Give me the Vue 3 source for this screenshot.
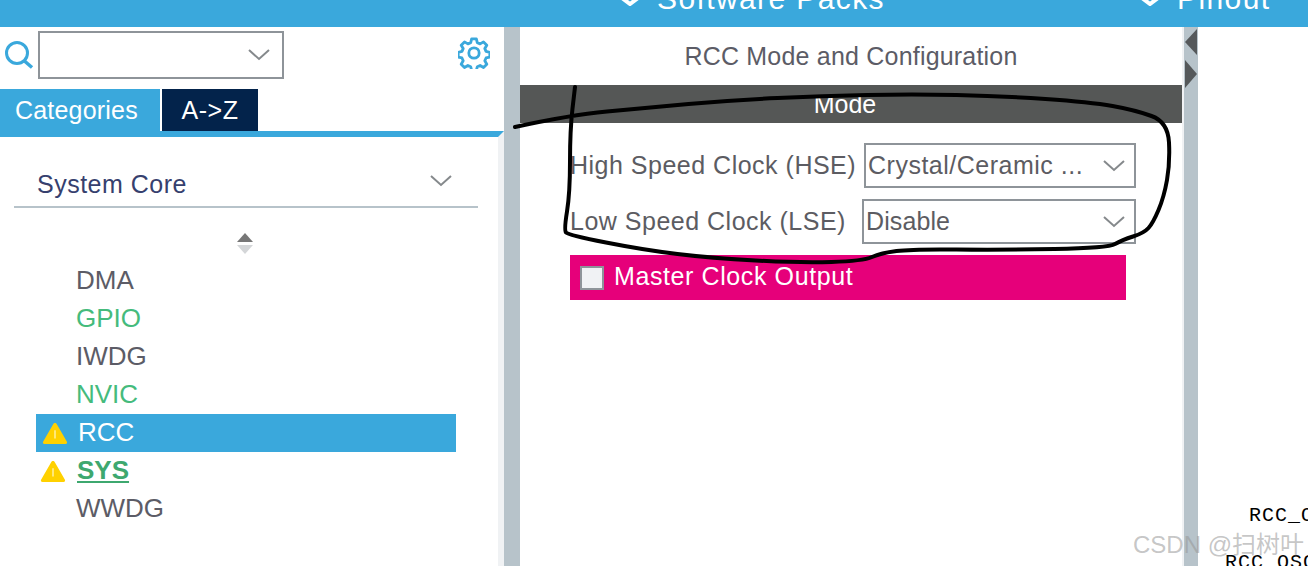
<script setup>
const items = [
  { name: 'DMA', cls: '' },
  { name: 'GPIO', cls: 'ok' },
  { name: 'IWDG', cls: '' },
  { name: 'NVIC', cls: 'ok' },
  { name: 'RCC', cls: 'active', warn: true },
  { name: 'SYS', cls: 'ok sys', warn: true },
  { name: 'WWDG', cls: '' },
];

// hand drawn loop over the screenshot, smoothed through midpoints
const pts = [
  [515, 127], [570, 115], [644, 108], [733, 100], [822, 96], [912, 94], [1001, 96],
  [1090, 102], [1135, 110], [1168, 122], [1170, 163], [1164, 197], [1153, 223],
  [1144, 233], [1122, 240], [1108, 248], [1001, 250], [912, 249], [881, 253],
  [863, 261], [800, 263], [711, 258], [644, 250], [568, 235], [564, 230],
  [570, 193], [570, 130], [575, 87],
];
function smooth(list) {
  let d = `M${list[0][0]} ${list[0][1]}`;
  for (let i = 1; i < list.length - 1; i++) {
    const mx = (list[i][0] + list[i + 1][0]) / 2;
    const my = (list[i][1] + list[i + 1][1]) / 2;
    d += ` Q${list[i][0]} ${list[i][1]} ${mx} ${my}`;
  }
  const last = list[list.length - 1];
  return d + ` L${last[0]} ${last[1]}`;
}
const loop = smooth(pts);
</script>

<template>
  <div class="page">
    <header class="top">
      <div class="top-item packs">
        <svg class="top-chev" width="20" height="8" viewBox="0 0 20 8"><path d="M2 0l8 6 8-6" fill="none" stroke="#fff" stroke-width="4" /></svg>
        <span>Software Packs</span>
      </div>
      <div class="top-item pinout">
        <svg class="top-chev" width="20" height="8" viewBox="0 0 20 8"><path d="M2 0l8 6 8-6" fill="none" stroke="#fff" stroke-width="4" /></svg>
        <span>Pinout</span>
      </div>
    </header>

    <div class="main">
      <aside class="left">
        <div class="search-row">
          <svg class="search-icon" width="30" height="30" viewBox="0 0 30 30">
            <circle cx="13" cy="13" r="10.5" fill="none" stroke="#3aa8dc" stroke-width="3" />
            <path d="M20.5 21l7.5 6.5" stroke="#3aa8dc" stroke-width="3.5" fill="none" />
          </svg>
          <div class="search-box">
            <svg width="22" height="12" viewBox="0 0 22 12"><path d="M1 1l10 9 10-9" fill="none" stroke="#85898c" stroke-width="2" /></svg>
          </div>
          <svg class="gear" width="32" height="32" viewBox="0 0 34 34">
            <circle cx="17" cy="17" r="5.5" fill="none" stroke="#3aa8dc" stroke-width="3" />
            <path d="M14.5 2h5l1 4 3 1.3 3.6-2.1 3.5 3.5-2.1 3.6 1.3 3 4 1v5l-4 1-1.3 3 2.1 3.6-3.5 3.5-3.6-2.1-3 1.3-1 4h-5l-1-4-3-1.3-3.6 2.1-3.5-3.5 2.1-3.6-1.3-3-4-1v-5l4-1 1.3-3-2.1-3.6 3.5-3.5 3.6 2.1 3-1.3z" fill="none" stroke="#3aa8dc" stroke-width="3" stroke-linejoin="round" />
          </svg>
        </div>
        <div class="tabs">
          <div class="tab on">Categories</div>
          <div class="tab off">A-&gt;Z</div>
        </div>
        <div class="left-body">
          <div class="group">
            <span>System Core</span>
            <svg width="22" height="12" viewBox="0 0 22 12"><path d="M1 1l10 9 10-9" fill="none" stroke="#85898c" stroke-width="2" /></svg>
          </div>
          <div class="scroller">
            <svg width="18" height="24" viewBox="0 0 18 24">
              <path d="M9 1l8 9H1z" fill="#777" />
              <path d="M9 22l-8-9h16z" fill="#d4d6d8" />
            </svg>
          </div>
          <ul class="list">
            <li v-for="it in items" :key="it.name" :class="['row', it.cls]">
              <svg v-if="it.warn" class="warn" width="26" height="22" viewBox="0 0 28 24">
                <path d="M14 1c1 0 1.500.5 2 1.500l11 19c.6 1.200 0 2.500-1.500 2.500h-23c-1.500 0-2.100-1.300-1.500-2.500l11-19c.5-1 1-1.500 2-1.500z" fill="#ffd100" />
                <path d="M14 9v9" stroke="#fff2b0" stroke-width="1.500" />
              </svg>
              <span class="name">{{ it.name }}</span>
            </li>
          </ul>
        </div>
      </aside>

      <div class="gutter"></div>

      <section class="center">
        <h2 class="title">RCC Mode and Configuration</h2>
        <div class="band">Mode</div>
        <div class="form">
          <div class="field hse">
            <label>High Speed Clock (HSE)</label>
            <div class="select">
              <span>Crystal/Ceramic ...</span>
              <svg width="22" height="12" viewBox="0 0 22 12"><path d="M1 1l10 9 10-9" fill="none" stroke="#85898c" stroke-width="2" /></svg>
            </div>
          </div>
          <div class="field lse">
            <label>Low Speed Clock (LSE)</label>
            <div class="select">
              <span>Disable</span>
              <svg width="22" height="12" viewBox="0 0 22 12"><path d="M1 1l10 9 10-9" fill="none" stroke="#85898c" stroke-width="2" /></svg>
            </div>
          </div>
          <div class="mco">
            <span class="check"></span>
            <span class="mco-label">Master Clock Output</span>
          </div>
        </div>
      </section>

      <div class="gutter thin">
        <div class="arrows">
          <svg width="12" height="26" viewBox="0 0 12 26"><path d="M12 0v26L0 13z" fill="#55585a" /></svg>
          <svg width="12" height="28" viewBox="0 0 12 28"><path d="M0 0v28l12-14z" fill="#55585a" /></svg>
        </div>
      </div>

      <section class="right">
        <span class="pin pin-a">RCC_OSC</span>
        <span class="pin pin-b">RCC_OSC</span>
      </section>
    </div>

    <svg class="scribble" width="1308" height="566" viewBox="0 0 1308 566">
      <path :d="loop" fill="none" stroke="#000" stroke-width="4" stroke-linecap="round" stroke-linejoin="round" />
    </svg>
    <div class="watermark">CSDN @扫树叶</div>
  </div>
</template>

<style>
html, body {
  margin: 0;
  overflow: hidden;
  background: #fff;
}
</style>

<style scoped>
.page {
  position: relative;
  width: 1308px;
  height: 566px;
  overflow: hidden;
  display: flex;
  flex-direction: column;
  font-family: "Liberation Sans", Arial, sans-serif;
  color: #5c5c62;
  background: #fff;
}
.top {
  height: 27px;
  flex: none;
  background: #3aa8dc;
  color: #fff;
  overflow: hidden;
  display: flex;
  align-items: flex-end;
  font-size: 30px;
  line-height: 32px;
  letter-spacing: 1.4px;
}
.top-item {
  display: flex;
  align-items: center;
  gap: 17px;
  margin-bottom: 12px;
  white-space: nowrap;
}
.top-chev {
  position: relative;
  top: 3px;
}
.packs {
  margin-left: 620px;
}
.pinout {
  margin-left: 255px;
}
.main {
  flex: 1;
  display: flex;
  min-height: 0;
}

.left {
  width: 504px;
  flex: none;
  display: flex;
  flex-direction: column;
}
.search-row {
  height: 62px;
  flex: none;
  display: flex;
  align-items: flex-start;
  padding: 4px 14px 0 4px;
  box-sizing: border-box;
}
.search-icon {
  margin: 9px 4px 0 0;
  flex: none;
}
.search-box {
  width: 246px;
  height: 48px;
  box-sizing: border-box;
  border: 2px solid #8e9499;
  display: flex;
  align-items: center;
  justify-content: flex-end;
  padding-right: 12px;
}
.gear {
  margin: 6px 0 0 auto;
}
.tabs {
  height: 42px;
  flex: none;
  display: flex;
  gap: 2px;
  font-size: 25px;
  line-height: 42px;
  color: #fff;
}
.tab.on {
  width: 160px;
  box-sizing: border-box;
  padding-left: 15px;
  background: #3aa8dc;
  letter-spacing: 0.2px;
}
.tab.off {
  width: 96px;
  text-align: center;
  background: #03234b;
  letter-spacing: 0.5px;
}
.left-body {
  flex: 1;
  border-top: 6px solid #3aa8dc;
  border-right: 6px solid #f0f2f4;
  padding: 0 20px 0 14px;
}
.group {
  height: 71px;
  box-sizing: border-box;
  border-bottom: 2px solid #b7c3ca;
  display: flex;
  align-items: center;
  justify-content: space-between;
  padding: 26px 26px 0 23px;
  font-size: 25px;
  color: #36406e;
  letter-spacing: 0.5px;
}
.group svg {
  margin-top: -8px;
}
.scroller {
  height: 54px;
  display: flex;
  justify-content: center;
  padding: 24px 2px 0 0;
  box-sizing: border-box;
}
.list {
  list-style: none;
  margin: 0;
  padding: 0 22px;
}
.row {
  position: relative;
  height: 38px;
  line-height: 36px;
  font-size: 26px;
  padding-left: 40px;
  color: #5c5c66;
}
.row.ok {
  color: #45bb7c;
}
.row.active {
  background: #3aa8dc;
  color: #fff;
  padding-left: 42px;
}
.warn {
  position: absolute;
  left: 6px;
  top: 8px;
}
.sys .warn {
  left: 4px;
}
.sys .name {
  font-weight: bold;
  color: #3ea86f;
  text-decoration: underline;
  margin-left: 1px;
}

.gutter {
  width: 16px;
  flex: none;
  background: #b7c3ca;
}
.gutter.thin {
  width: 14px;
}
.arrows {
  display: flex;
  flex-direction: column;
  gap: 5px;
  padding: 2px 0 0 1px;
}

.center {
  width: 664px;
  flex: none;
  box-sizing: border-box;
  border-right: 2px solid #f0f2f4;
}
.title {
  margin: 0;
  height: 58px;
  line-height: 58px;
  text-align: center;
  font-size: 25px;
  font-weight: normal;
  color: #5c5c66;
  letter-spacing: 0.2px;
}
.band {
  height: 38px;
  line-height: 38px;
  background: #555756;
  color: #fff;
  text-align: center;
  font-size: 25px;
  padding-right: 12px;
}
.form {
  display: flex;
  flex-direction: column;
  padding: 20px 46px 0 50px;
  font-size: 25px;
  letter-spacing: 0.5px;
}
.field {
  height: 45px;
  display: flex;
  align-items: center;
  justify-content: space-between;
  margin-bottom: 11px;
  white-space: nowrap;
}
.select {
  box-sizing: border-box;
  height: 45px;
  border: 2px solid #8e9499;
  display: flex;
  align-items: center;
  justify-content: space-between;
  padding: 0 9px 0 2px;
}
.hse .select {
  width: 272px;
}
.lse .select {
  width: 274px;
}
.lse .select span {
  letter-spacing: 0.1px;
}
.mco {
  width: 556px;
  height: 45px;
  background: #e6007a;
  color: #fff;
  display: flex;
  align-items: center;
  gap: 10px;
  padding-left: 10px;
  box-sizing: border-box;
}
.mco-label {
  margin-top: -2px;
  letter-spacing: 0.6px;
}
.check {
  width: 24px;
  height: 24px;
  box-sizing: border-box;
  border: 2px solid #8e9499;
  background: #f0f2f4;
}

.right {
  flex: 1;
  position: relative;
}
.pin {
  position: absolute;
  font-family: "Liberation Mono", monospace;
  font-size: 20px;
  color: #000;
  letter-spacing: 1px;
  white-space: nowrap;
}
.pin-a {
  left: 51px;
  top: 477px;
}
.pin-b {
  left: 27px;
  top: 524px;
}

.scribble {
  position: absolute;
  left: 0;
  top: 0;
  pointer-events: none;
}
.watermark {
  position: absolute;
  left: 1133px;
  top: 525px;
  font-size: 24px;
  font-family: "Liberation Sans", "Noto Sans CJK SC", sans-serif;
  color: rgba(150, 150, 150, 0.55);
  white-space: nowrap;
}
</style>
